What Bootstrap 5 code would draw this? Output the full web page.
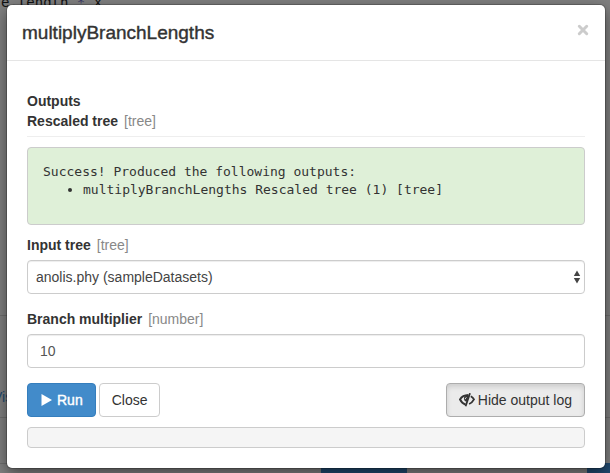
<!DOCTYPE html>
<html lang="en">
<head>
<meta charset="utf-8">
<meta name="viewport" content="width=device-width, initial-scale=1">
<title>multiplyBranchLengths</title>
<link href="https://cdn.jsdelivr.net/npm/bootstrap@5.3.0/dist/css/bootstrap.min.css" rel="stylesheet">
<style>
  body { font-family: "Liberation Sans", Arial, sans-serif; font-size: 14px; line-height: 20px; color: #333; background: #808080; overflow: hidden; }
  .backdrop-page { position: absolute; inset: 0; z-index: 0; overflow: hidden; background: #808080; }
  .code-line { position: absolute; left: 1px; top: -7px; font: 14px/18px "DejaVu Sans Mono", monospace; color: #111; white-space: pre; }
  .code-line span { color: #3a3a66; }
  .rule-a, .rule-b, .rule-c { position: absolute; left: 0; right: 0; height: 1px; background: #6e6e6e; }
  .rule-a { top: 315px; }
  .rule-b { top: 417px; }
  .rule-c { top: 463px; }
  .view-link { position: absolute; left: -7px; top: 387px; color: #214a70; text-decoration: none; }
  .foot-row { position: absolute; left: 0; right: 0; bottom: 0; height: 10px; }
  .foot-a, .foot-b { position: absolute; top: 0; bottom: 0; background: #214a70; }
  .foot-a { left: 321px; width: 86px; }
  .foot-b { left: 587px; right: 0; }
  .dialog-shell { position: relative; z-index: 1; margin: 5px 5px 5px 7px; }
  .dialog-box { border: 0; border-radius: 5px; background: #fff; color: #333; box-shadow: 0 0 0 1px rgba(0,0,0,.2), 0 5px 15px rgba(0,0,0,.5); }
  .dialog-head { padding: 15px; border-bottom: 1px solid #e5e5e5; }
  .dialog-title { font-size: 19px; line-height: 25px; font-weight: 400; -webkit-text-stroke: .4px #333; }
  .close-btn { width: 14px; height: 14px; border: 0; background: none; padding: 0; color: #ccc; margin-top: 3px; }
  .dialog-content { padding: 30px 20px 20px; }
  .kind { color: #888; font-weight: 400; margin-left: 6px; }
  .divider { border-top: 1px solid #eee; margin-top: 5px; }
  .success-log { margin-top: 10px; min-height: 78px; padding: 15px; border: 1px solid #ccc; border-radius: 4px; background: #dff0d8; font: 13px/18px "DejaVu Sans Mono", monospace; }
  .success-log ul { padding-left: 40px; }
  .field-label { display: block; font-weight: 700; margin: 10px 0 5px; }
  .field-gap { margin-top: 15px; }
  .field-box { height: 34px; font-size: 14px; line-height: 20px; color: #555; border: 1px solid #ccc; border-radius: 4px; box-shadow: inset 0 1px 1px rgba(0,0,0,.075); }
  .field-box.form-select { padding: 6px 8px; background-image: none; color: #444; }
  .field-box.form-control { padding: 6px 12px; }
  .select-arrows { position: absolute; right: 4px; top: 10px; pointer-events: none; }
  .action-row { margin-top: 15px; }
  .action-pair { gap: 3px; }
  .action { height: 34px; padding: 6px 12px; font-size: 14px; line-height: 20px; border-radius: 4px; }
  .action-run { background: #428bca; border-color: #357ebd; color: #fff; -webkit-text-stroke: .4px #fff; }
  .action-close { background: #fff; border-color: #ccc; color: #333; }
  .action-hide { gap: 3px; background: #ebebeb; border-color: #adadad; color: #333; box-shadow: inset 0 3px 5px rgba(0,0,0,.125); }
  .log-bar { margin-top: 10px; height: 21px; border: 1px solid #ccc; border-radius: 4px; background: #f5f5f5; }
</style>
<script src="https://cdn.jsdelivr.net/npm/bootstrap@5.3.0/dist/js/bootstrap.bundle.min.js"></script>
</head>
<body>
<div class="backdrop-page" aria-hidden="true">
  <div class="code-line">e.length <span>*</span> x</div>
  <div class="rule-a"></div><div class="rule-b"></div><div class="rule-c"></div>
  <a class="view-link" href="#" tabindex="-1">Vis</a>
  <div class="foot-row"><div class="foot-a"></div><div class="foot-b"></div></div>
</div>

<main class="dialog-shell" role="dialog" aria-labelledby="dialogTitle">
  <div class="modal-content dialog-box">
    <header class="dialog-head d-flex justify-content-between align-items-start">
      <h1 class="dialog-title mb-0" id="dialogTitle">multiplyBranchLengths</h1>
      <button type="button" class="close-btn d-flex" aria-label="Close dialog">
        <svg width="14" height="14" viewBox="0 0 14 14"><path d="M3.3 3.3l7.4 7.4M10.7 3.3l-7.4 7.4" fill="none" stroke="currentColor" stroke-width="3" stroke-linecap="round"/></svg>
      </button>
    </header>
    <form class="dialog-content">
      <div class="fw-bold">Outputs</div>
      <div class="fw-bold">Rescaled tree<span class="kind">[tree]</span></div>
      <div class="divider"></div>
      <div class="success-log">
        <div>Success! Produced the following outputs:</div>
        <ul class="mb-0"><li>multiplyBranchLengths Rescaled tree (1) [tree]</li></ul>
      </div>

      <label class="field-label" for="inputTree">Input tree<span class="kind">[tree]</span></label>
      <div class="position-relative">
        <select class="form-select field-box" id="inputTree"><option>anolis.phy (sampleDatasets)</option></select>
        <svg class="select-arrows" width="8" height="14" viewBox="0 0 8 14" fill="#444"><path d="M4 .5L7.2 6H.8zM4 13.5L.8 8h6.4z"/></svg>
      </div>

      <label class="field-label field-gap" for="multiplier">Branch multiplier<span class="kind">[number]</span></label>
      <input class="form-control field-box" id="multiplier" type="text" value="10">

      <div class="action-row d-flex justify-content-between">
        <div class="action-pair d-flex">
          <button type="button" class="btn action action-run d-flex align-items-center gap-1">
            <svg width="13" height="14" viewBox="0 0 13 14" fill="currentColor"><path d="M1.5 1L12 7 1.5 13z"/></svg>Run
          </button>
          <button type="button" class="btn action action-close">Close</button>
        </div>
        <button type="button" class="btn action action-hide d-flex align-items-center" aria-pressed="true">
          <svg width="16" height="14" viewBox="0 0 16 14" fill="none" stroke="currentColor"><path d="M6.6 11.6C4 10.6 2 8.8 1 6.4 2.600 3.800 5.200 2.200 9.400 2" stroke-width="2"/><path d="M11 .2L6.600 13.300" stroke-width="1.800"/><path d="M11.800 3.200c1.500.8 2.500 1.900 3.200 3.200-1 1.900-2.600 3.600-4.900 4.600" stroke-width="1.800"/><path d="M5.600 3.200c-1.300 2.300-.6 4.900 2 5.600L10 2.600z" fill="currentColor" stroke="none"/><path d="M6.200 6.200c0-.9.500-1.500 1.300-1.700" stroke="#ebebeb" stroke-width="1"/></svg>
          <span>Hide output log</span>
        </button>
      </div>
      <div class="log-bar"></div>
    </form>
  </div>
</main>
</body>
</html>
